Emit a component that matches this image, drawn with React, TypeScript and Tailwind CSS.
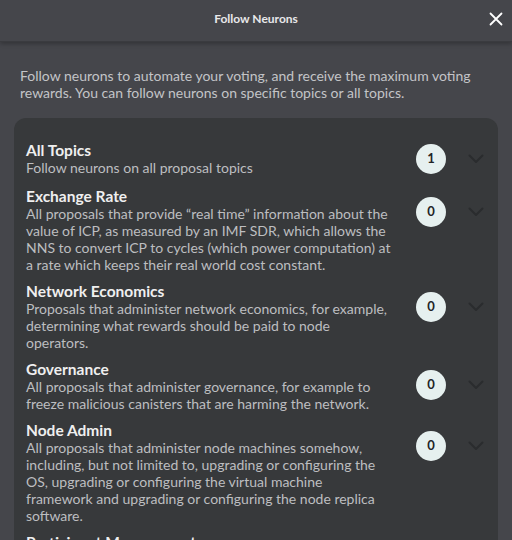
import React from 'react';

interface Topic {
    title: string;
    description: string;
    count: number;
}

const topics: Topic[] = [
    { title: 'All Topics', description: 'Follow neurons on all proposal topics', count: 1 },
    {
        title: 'Exchange Rate',
        description: 'All proposals that provide “real time” information about the value of ICP, as measured by an IMF SDR, which allows the NNS to convert ICP to cycles (which power computation) at a rate which keeps their real world cost constant.',
        count: 0,
    },
    {
        title: 'Network Economics',
        description: 'Proposals that administer network economics, for example, determining what rewards should be paid to node operators.',
        count: 0,
    },
    {
        title: 'Governance',
        description: 'All proposals that administer governance, for example to freeze malicious canisters that are harming the network.',
        count: 0,
    },
    {
        title: 'Node Admin',
        description: 'All proposals that administer node machines somehow, including, but not limited to, upgrading or configuring the OS, upgrading or configuring the virtual machine framework and upgrading or configuring the node replica software.',
        count: 0,
    },
    {
        title: 'Participant Management',
        description: 'All proposals that administer node provider and data center participants.',
        count: 0,
    },
];

const Chevron = () => (
    <svg width="16" height="10" viewBox="0 0 16 10" fill="none">
        <path d="M1.5 1.5 L8 8 L14.5 1.5" stroke="#2a2c2e" strokeWidth="2" strokeLinecap="round" strokeLinejoin="round" />
    </svg>
);

const TopicRow: React.FC<{ topic: Topic; first: boolean }> = ({ topic, first }) => (
    <div className={`flex ${first ? 'items-center mb-[2px]' : 'items-start'}`}>
        <div className="w-[366px] shrink-0">
            <h3 className="text-[15.5px] leading-[18px] font-bold text-[#efefef]">{topic.title}</h3>
            <p className="text-[14px] leading-[17px] text-[#bdbec0]">{topic.description}</p>
        </div>
        <div className={`flex items-center ${first ? '' : 'mt-[10px]'}`}>
            <div className="ml-[24px] w-[30px] h-[30px] rounded-full bg-[#e6f0ef] flex items-center justify-center text-[13px] font-bold text-[#222426]">
                {topic.count}
            </div>
            <div className="ml-[22px]">
                <Chevron />
            </div>
        </div>
    </div>
);

const App: React.FC = () => {
    return (
        <div className="w-[512px] h-[540px] overflow-hidden bg-[#45464b]" style={{ fontFamily: 'Lato, "Noto Sans", sans-serif' }}>
            <div className="relative h-[42px] flex items-center justify-center border-b border-[#3a3b3f] shadow-[0_2px_4px_rgba(0,0,0,0.25)]">
                <span className="text-[12px] leading-[14px] font-bold text-[#e8e8ea] -mt-[3px]">Follow Neurons</span>
                <button className="absolute right-[6px] top-[9px] w-[20px] h-[20px] flex items-center justify-center">
                    <svg width="14" height="14" viewBox="0 0 14 14">
                        <path d="M1.5 1.5 L12.5 12.5 M12.5 1.5 L1.5 12.5" stroke="#ffffff" strokeWidth="1.8" strokeLinecap="round" />
                    </svg>
                </button>
            </div>
            <p className="px-[20px] pt-[25px] text-[14px] leading-[17px] text-[#c3c4c7]">
                Follow neurons to automate your voting, and receive the maximum voting rewards. You can follow neurons on specific topics or all topics.
            </p>
            <div className="mx-[14px] mt-[17px] rounded-[12px] bg-[#37393b] pl-[12px] pt-[23px] pb-[20px] flex flex-col gap-[9px]">
                {topics.map((t, i) => (
                    <TopicRow key={t.title} topic={t} first={i === 0} />
                ))}
            </div>
        </div>
    );
};

export default App;
